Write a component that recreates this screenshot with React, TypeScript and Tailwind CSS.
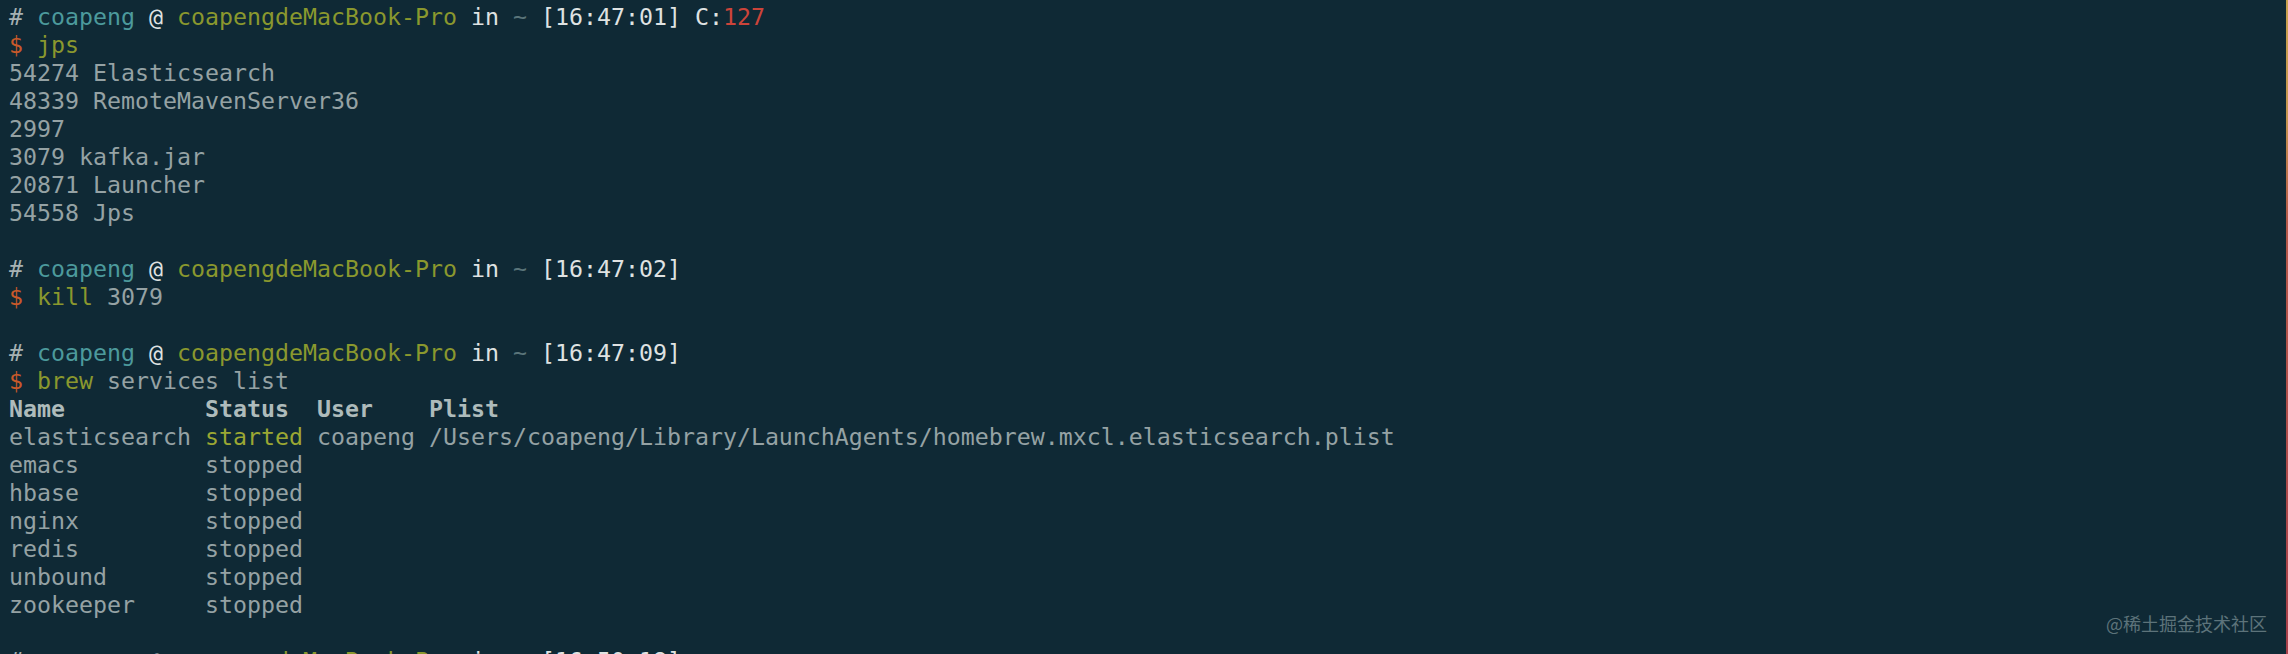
import React from 'react';

type Seg = { t: string; c?: string; b?: boolean };

// 终端配色
const C = {
  hash: 'text-[#a6b1b3]',
  user: 'text-[#4c9a9c]',
  at: 'text-[#dfe2e2]',
  host: 'text-[#8a982e]',
  white: 'text-[#dfe2e2]',
  tilde: 'text-[#5a747a]',
  red: 'text-[#cc443a]',
  dollar: 'text-[#c8592a]',
  cmd: 'text-[#8a982e]',
  out: 'text-[#95a2a4]',
  head: 'text-[#aebbbb]',
  started: 'text-[#9ba733]',
};

const prompt = (time: string, extra?: Seg[]): Seg[] => [
  { t: '# ', c: C.hash },
  { t: 'coapeng', c: C.user },
  { t: ' @ ', c: C.at },
  { t: 'coapengdeMacBook-Pro', c: C.host },
  { t: ' in ', c: C.white },
  { t: '~', c: C.tilde },
  { t: ` [${time}]`, c: C.white },
  ...(extra ?? []),
];

const cmd = (name: string, rest: string): Seg[] => [
  { t: '$ ', c: C.dollar },
  { t: name, c: C.cmd },
  { t: rest, c: C.out },
];

const out = (t: string): Seg[] => [{ t, c: C.out }];

const service = (name: string): Seg[] => out(name.padEnd(14, ' ') + 'stopped');

const lines: Seg[][] = [
  prompt('16:47:01', [
    { t: ' C:', c: C.white },
    { t: '127', c: C.red },
  ]),
  cmd('jps', ''),
  out('54274 Elasticsearch'),
  out('48339 RemoteMavenServer36'),
  out('2997'),
  out('3079 kafka.jar'),
  out('20871 Launcher'),
  out('54558 Jps'),
  [],
  prompt('16:47:02'),
  cmd('kill', ' 3079'),
  [],
  prompt('16:47:09'),
  cmd('brew', ' services list'),
  [{ t: 'Name          Status  User    Plist', c: C.head, b: true }],
  [
    { t: 'elasticsearch ', c: C.out },
    { t: 'started', c: C.started },
    { t: ' coapeng /Users/coapeng/Library/LaunchAgents/homebrew.mxcl.elasticsearch.plist', c: C.out },
  ],
  service('emacs'),
  service('hbase'),
  service('nginx'),
  service('redis'),
  service('unbound'),
  service('zookeeper'),
  [],
  prompt('16:50:18'),
];

export default function App() {
  return (
    <div className="flex h-[654px] w-[2288px] overflow-hidden bg-[#0f2935]">
      <div className="relative flex-1 overflow-hidden pl-[9px] pt-[3px] font-['DejaVu_Sans_Mono',monospace] text-[23.26px] leading-[28px]">
        {lines.map((segs, i) => (
          <div key={i} className="h-[28px] whitespace-pre">
            {segs.map((s, j) => (
              <span key={j} className={`${s.c ?? ''} ${s.b ? 'font-bold' : ''}`}>
                {s.t}
              </span>
            ))}
          </div>
        ))}
        {/* 水印 */}
        <div className="absolute bottom-[20px] right-[19px] font-['Noto_Sans_CJK_SC',sans-serif] text-[18px] leading-[22px] text-[#5d737a]">
          @稀土掘金技术社区
        </div>
      </div>
      <div className="w-[2px] bg-[linear-gradient(to_bottom,#c9a24f_0%,#c59550_18%,#b5594a_34%,#a8404b_100%)]" />
    </div>
  );
}
